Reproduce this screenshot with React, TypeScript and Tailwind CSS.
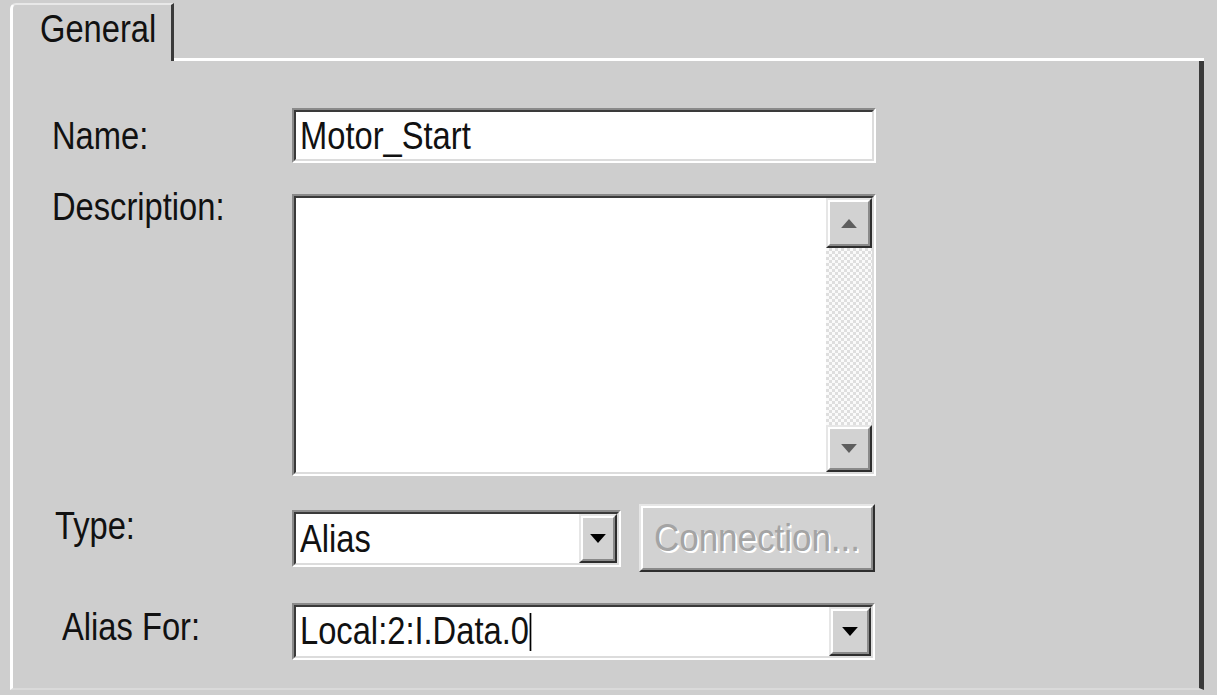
import type { ReactNode } from "react";

const TXT = "inline-block origin-left scale-x-[0.86] whitespace-nowrap";

const Sunken = ({ className = "", inner = "", children }: { className?: string; inner?: string; children?: ReactNode }) => (
    <div className={`shrink-0 border-2 border-t-[#8a8a8a] border-l-[#8a8a8a] border-b-white border-r-white ${className}`}>
        <div className={`h-full border-2 border-t-[#3a3a3a] border-l-[#3a3a3a] border-b-[#dcdcdc] border-r-[#dcdcdc] bg-white ${inner}`}>
            {children}
        </div>
    </div>
);

const Raised = ({ className = "", children }: { className?: string; children?: ReactNode }) => (
    <div className={`shrink-0 border-2 border-t-[#e6e6e6] border-l-[#e6e6e6] border-b-[#2e2e2e] border-r-[#2e2e2e] ${className}`}>
        <div className="h-full flex items-center justify-center border-2 border-t-white border-l-white border-b-[#8a8a8a] border-r-[#8a8a8a] bg-[#d2d2d2]">
            {children}
        </div>
    </div>
);

const Arrow = ({ up = false, color = "#000" }: { up?: boolean; color?: string }) => (
    <svg width="16" height="9" viewBox="0 0 7 4" className={up ? "rotate-180" : ""}>
        <path d="M0 0h7L3.5 4z" fill={color} />
    </svg>
);

const Label = ({ className = "", children }: { className?: string; children: ReactNode }) => (
    <div className={`w-[279px] shrink-0 text-[38px] leading-none text-[#111] ${className}`}>
        <span className={TXT}>{children}</span>
    </div>
);

const Value = ({ children }: { children: ReactNode }) => (
    <div className="flex-1 flex items-center pl-[4px] text-[38px] leading-none text-[#111] overflow-hidden">
        <span className={TXT}>{children}</span>
    </div>
);

export default function App() {
    return (
        <div className="w-[1217px] h-[695px] overflow-hidden bg-[#cecece] font-['Liberation_Sans',Arial,sans-serif] flex flex-col pl-[10px] pr-[13px]">
            {/* tab strip */}
            <div className="flex h-[61px] shrink-0">
                <div className="w-[164px] shrink-0 mt-[3px] rounded-tl-[6px] border-t-2 border-l-[3px] border-r-[3px] border-t-[#e8e8e8] border-l-white border-r-[#3a3a3a] pl-[27px] pt-[5px] text-[38px] leading-none text-[#111]">
                    <span className={TXT}>General</span>
                </div>
                <div className="flex-1 border-b-[3px] border-white" />
            </div>

            {/* page */}
            <div className="flex-1 mb-[5px] border-l-[3px] border-l-white border-r-[5px] border-r-[#3a3a3a] border-b-2 border-b-[#dadada] flex flex-col">
                <div className="flex items-center mt-[47px]">
                    <Label className="pl-[39px]">Name:</Label>
                    <Sunken className="w-[584px] h-[55px]" inner="flex">
                        <Value>Motor_Start</Value>
                    </Sunken>
                </div>

                <div className="flex items-start mt-[31px]">
                    <Label className="pl-[39px] -mt-[6px]">Description:</Label>
                    <Sunken className="w-[584px] h-[282px]" inner="flex justify-end">
                        <div className="w-[46px] flex flex-col">
                            <Raised className="h-[50px]">
                                <Arrow up color="#5e5e5e" />
                            </Raised>
                            <div className="flex-1 bg-[repeating-conic-gradient(#dedede_0_25%,#fafafa_0_50%)] bg-[length:6px_6px]" />
                            <Raised className="h-[47px]">
                                <Arrow color="#5e5e5e" />
                            </Raised>
                        </div>
                    </Sunken>
                </div>

                <div className="flex items-start mt-[28px]">
                    <Label className="pl-[42px] mt-[3px]">Type:</Label>
                    <Sunken className="w-[329px] h-[57px] mt-[6px]" inner="flex">
                        <Value>Alias</Value>
                        <Raised className="w-[38px]">
                            <Arrow />
                        </Raised>
                    </Sunken>
                    <Raised className="w-[236px] h-[68px] ml-[18px]">
                        <span className="inline-block scale-x-[0.92] whitespace-nowrap text-[38px] leading-none text-[#a4a4a4] [text-shadow:2px_2px_0_#ffffff]">
                            Connection...
                        </span>
                    </Raised>
                </div>

                <div className="flex items-start mt-[31px]">
                    <Label className="pl-[49px] mt-[5px]">Alias For:</Label>
                    <Sunken className="w-[583px] h-[57px]" inner="flex">
                        <Value>
                            Local:2:I.Data.0
                            <span className="inline-block w-[2px] h-[38px] bg-black ml-[1px] align-[-7px]" />
                        </Value>
                        <Raised className="w-[42px]">
                            <Arrow />
                        </Raised>
                    </Sunken>
                </div>
            </div>
        </div>
    );
}
